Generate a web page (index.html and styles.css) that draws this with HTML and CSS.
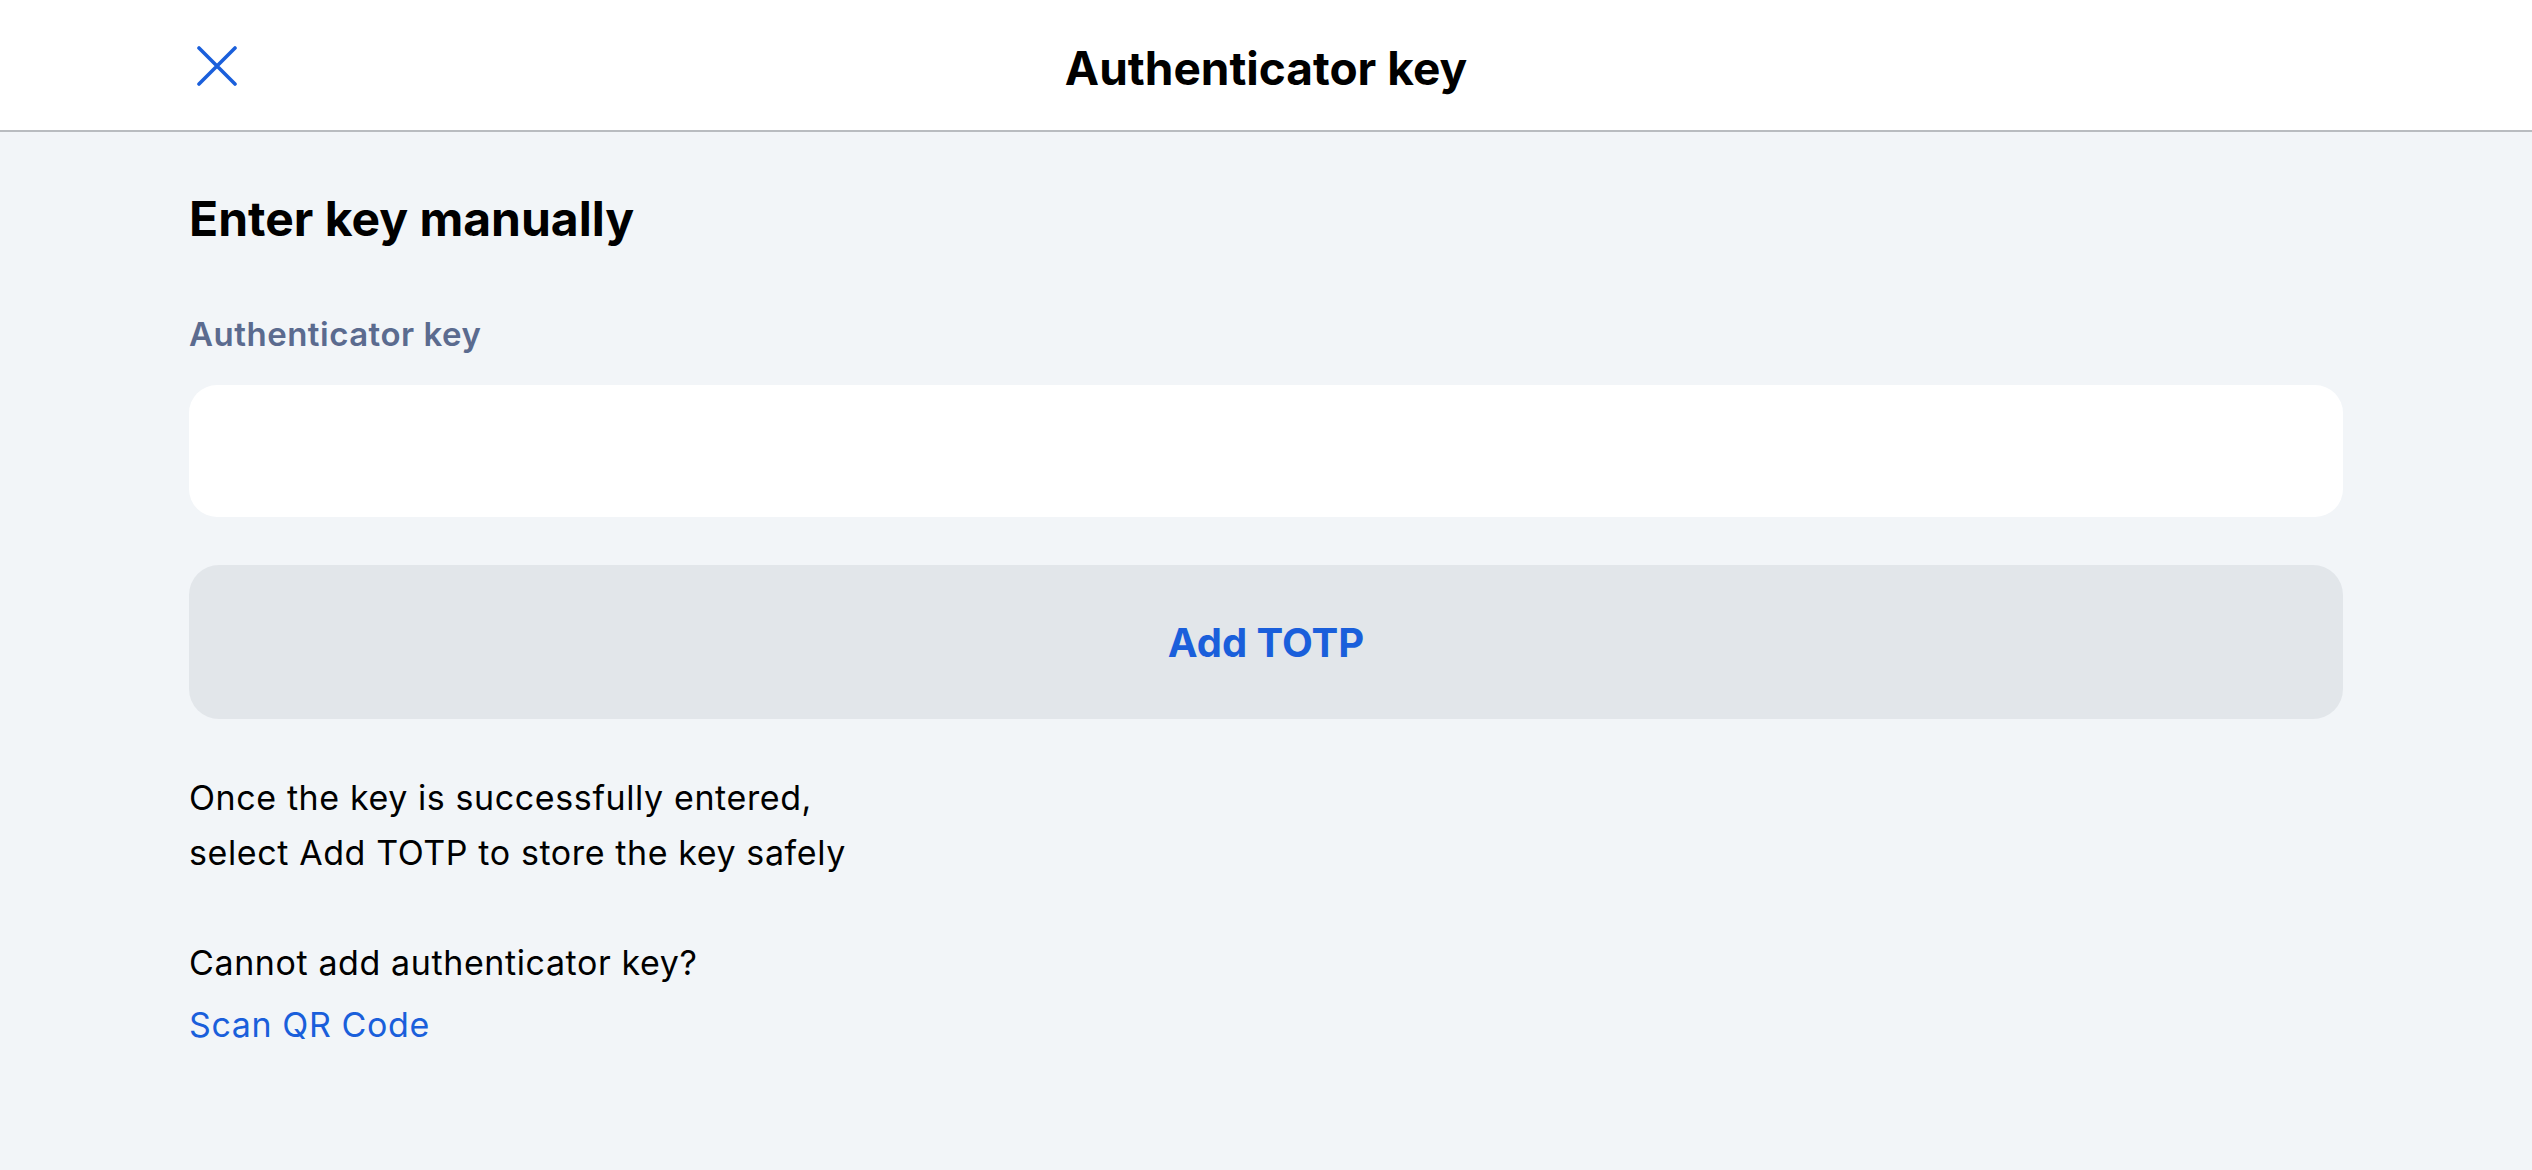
FILE: index.html
```html
<!DOCTYPE html>
<html lang="en">
<head>
<meta charset="utf-8">
<title>Authenticator key</title>
<link rel="stylesheet" href="styles.css">
</head>
<body>
<header class="topbar">
  <div class="topbar-left">
    <button class="close-btn" aria-label="Close">
      <svg width="40" height="40" viewBox="0 0 40 40" fill="none" stroke="#1a5fdb" stroke-width="3.6" stroke-linecap="round">
        <path d="M2 2 L38 38 M38 2 L2 38"/>
      </svg>
    </button>
  </div>
  <h1 class="topbar-title">Authenticator key</h1>
  <div class="topbar-right"></div>
</header>
<main class="content">
  <h2 class="section-title">Enter key manually</h2>
  <label class="field-label" for="key">Authenticator key</label>
  <input class="field-input" id="key" type="text">
  <button class="primary-btn">Add TOTP</button>
  <p class="info">Once the key is successfully entered,<br>select Add TOTP to store the key safely</p>
  <div class="alt">
    <p class="alt-text">Cannot add authenticator key?</p>
    <a class="alt-link" href="#">Scan QR Code</a>
  </div>
</main>
</body>
</html>
```

FILE: styles.css
```css
* { box-sizing: border-box; }
html, body {
  margin: 0;
  padding: 0;
  height: 100%;
}
body {
  background: #f2f5f8;
  font-family: Inter, "Noto Sans", sans-serif;
  color: #000;
}
.topbar {
  height: 132px;
  background: #fff;
  border-bottom: 2px solid #b9bcc0;
  display: grid;
  grid-template-columns: 1fr auto 1fr;
  align-items: center;
}
.topbar-left {
  padding-left: 197px;
  display: flex;
  align-items: center;
}
.close-btn {
  width: 40px;
  height: 40px;
  padding: 0;
  margin-top: 2px;
  border: 0;
  background: none;
  display: flex;
}
.topbar-title {
  margin: 0;
  padding-top: 6px;
  font-size: 46px;
  font-weight: 700;
  line-height: 50px;
}
.content {
  padding: 59px 189px 0;
  display: flex;
  flex-direction: column;
  align-items: flex-start;
}
.section-title {
  margin: 0;
  font-size: 48px;
  line-height: 56px;
  font-weight: 700;
}
.field-label {
  margin-top: 67px;
  font-size: 33px;
  line-height: 40px;
  font-weight: 600;
  letter-spacing: 0.5px;
  color: #5b6b8f;
}
.field-input {
  margin-top: 31px;
  width: 100%;
  height: 132px;
  border: 0;
  border-radius: 28px;
  background: #fff;
  font: inherit;
  font-size: 34px;
  padding: 0 30px;
  outline: none;
}
.primary-btn {
  margin-top: 48px;
  width: 100%;
  height: 154px;
  border: 0;
  border-radius: 30px;
  background: #e2e6ea;
  color: #1a5fdb;
  font-family: inherit;
  font-size: 40px;
  font-weight: 700;
}
.info {
  margin: 51px 0 0;
  font-size: 34px;
  line-height: 55px;
  letter-spacing: 0.6px;
}
.alt {
  margin-top: 55px;
  display: flex;
  flex-direction: column;
}
.alt-text {
  margin: 0;
  font-size: 34px;
  line-height: 55px;
  letter-spacing: 0.6px;
}
.alt-link {
  margin-top: 7px;
  font-size: 34px;
  line-height: 55px;
  letter-spacing: 0.6px;
  color: #1a5fdb;
  text-decoration: none;
}
```
